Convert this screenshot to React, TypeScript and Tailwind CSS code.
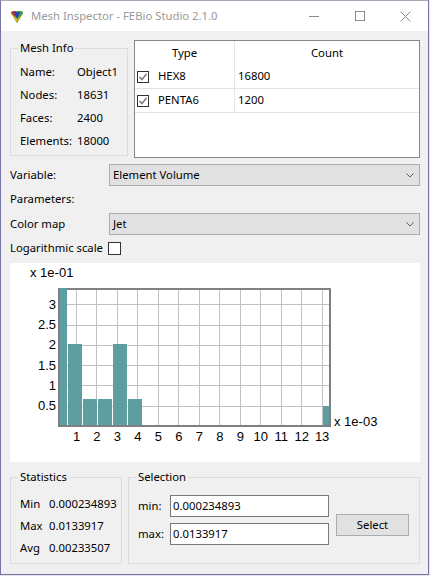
import type { ReactNode } from 'react'

const BAR_COLOR = '#5f9ea0'
const PLOT = { left: 49, top: 26, right: 320, bottom: 163 }
const X_TICK0 = 66
const X_TICK_STEP = 20.47
const Y_UNIT = 40.56
const BAR_X0 = 43
const BAR_PITCH = 15
const BAR_WIDTH = 14

// histogram bins (value in units of 1e-01)
const BARS = [
  { k: 0, value: 3.42 },
  { k: 1, value: 2.03 },
  { k: 2, value: 0.666 },
  { k: 3, value: 0.666 },
  { k: 4, value: 2.03 },
  { k: 5, value: 0.666 },
  { k: 18, value: 0.5 },
]

const Y_TICKS = ['0.5', '1', '1.5', '2', '2.5', '3']
const X_TICKS = ['1', '2', '3', '4', '5', '6', '7', '8', '9', '10', '11', '12', '13']

const ELEMENT_TYPES = [
  { type: 'HEX8', count: '16800' },
  { type: 'PENTA6', count: '1200' },
]

const MESH_INFO = [
  ['Name:', 'Object1'],
  ['Nodes:', '18631'],
  ['Faces:', '2400'],
  ['Elements:', '18000'],
]

const STATS = [
  ['Min', '0.000234893'],
  ['Max', '0.0133917'],
  ['Avg', '0.00233507'],
]

function AppIcon() {
  return (
    <svg width="14" height="14" viewBox="0 0 14 14">
      <path d="M1 3 Q1 1.5 3 1.3 L11 1.3 Q13 1.5 13 3 L7 13 Z" fill="#3a7a2a" />
      <polygon points="1,3 3,1.3 6,1.3 6,7" fill="#d9261c" />
      <polygon points="8,1.3 11,1.3 13,3 8,7" fill="#3aa53a" />
      <polygon points="3.5,2.2 10.5,2.2 7,8.5" fill="#2340d0" />
      <polygon points="1,3 7,8.5 7,13" fill="#e0b020" />
      <polygon points="13,3 7,8.5 7,13" fill="#8cb030" />
    </svg>
  )
}

function CheckBox({ checked, size }: { checked: boolean; size: 'sm' | 'md' }) {
  return (
    <span
      className={
        size === 'sm'
          ? 'flex h-[12px] w-[12px] shrink-0 items-center justify-center border border-[#333333] bg-white'
          : 'flex h-[13px] w-[13px] shrink-0 items-center justify-center border border-[#333333] bg-white'
      }
    >
      {checked && (
        <svg width="10" height="10" viewBox="0 0 10 10">
          <path d="M1.5 5 L4 7.5 L8.5 2" fill="none" stroke="#6b6b6b" strokeWidth="1.2" />
        </svg>
      )}
    </span>
  )
}

function GroupBox({ title, className, children }: { title: string; className: string; children: ReactNode }) {
  return (
    <fieldset className={className}>
      <legend className="ml-[7px] px-[2px] leading-[16px]">{title}</legend>
      {children}
    </fieldset>
  )
}

function ComboBox({ value }: { value: string }) {
  return (
    <div className="flex h-[22px] items-center justify-between border border-[#adadad] bg-[#e1e1e1] pl-[3px] pr-[5px]">
      <span>{value}</span>
      <svg width="8" height="5" viewBox="0 0 8 5">
        <path d="M0.5 0.5 L4 4 L7.5 0.5" fill="none" stroke="#606060" strokeWidth="1" />
      </svg>
    </div>
  )
}

function Histogram() {
  return (
    <svg width="410" height="199" viewBox="0 0 410 199" className="block">
      {X_TICKS.map((_, i) => {
        const x = Math.round(X_TICK0 + X_TICK_STEP * i) + 0.5
        return <line key={`gx${i}`} x1={x} x2={x} y1={PLOT.top} y2={PLOT.bottom} stroke="#c0c0c0" strokeWidth="1" />
      })}
      {Y_TICKS.map((_, i) => {
        const y = Math.round(PLOT.bottom - Y_UNIT * 0.5 * (i + 1)) + 0.5
        return <line key={`gy${i}`} x1={PLOT.left} x2={PLOT.right} y1={y} y2={y} stroke="#c0c0c0" strokeWidth="1" />
      })}
      <rect
        x={PLOT.left}
        y={PLOT.top}
        width={PLOT.right - PLOT.left}
        height={PLOT.bottom - PLOT.top}
        fill="none"
        stroke="#808080"
        strokeWidth="2"
      />
      {BARS.map((b) => {
        const x0 = Math.max(BAR_X0 + BAR_PITCH * b.k, PLOT.left + 1)
        const x1 = Math.min(BAR_X0 + BAR_PITCH * b.k + BAR_WIDTH, PLOT.right - 1)
        const top = Math.max(Math.round(PLOT.bottom - b.value * Y_UNIT), PLOT.top - 1)
        return <rect key={b.k} x={x0} y={top} width={x1 - x0} height={PLOT.bottom - 1 - top} fill={BAR_COLOR} />
      })}
      <g fontFamily="'Liberation Sans', Arial, sans-serif" fontSize="13" fill="#000">
        <text x="20" y="14">x 1e-01</text>
        {Y_TICKS.map((t, i) => (
          <text key={t} x="46" y={PLOT.bottom - Y_UNIT * 0.5 * (i + 1) + 4.6} textAnchor="end">
            {t}
          </text>
        ))}
        {X_TICKS.map((t, i) => (
          <text key={t} x={X_TICK0 + X_TICK_STEP * i + 0.5} y="178" textAnchor="middle">
            {t}
          </text>
        ))}
        <text x="324" y="162.5">x 1e-03</text>
      </g>
    </svg>
  )
}

export default function App() {
  return (
    <div className="h-[576px] w-[430px] bg-[#e6e6e6] font-['Noto_Sans',sans-serif] text-[11.3px] text-black">
      <div className="flex h-[575px] w-[429px] flex-col border border-[#7474a6] border-t-[#a8a8b8]">
        {/* Title bar */}
        <div className="flex h-[30px] shrink-0 items-center bg-white">
          <div className="ml-[9px] mt-[1px]">
            <AppIcon />
          </div>
          <span className="ml-[7px] text-[11.3px] text-[#9a9a9a]">Mesh Inspector - FEBio Studio 2.1.0</span>
          <div className="ml-auto flex h-full">
            <div className="flex w-[46px] items-center justify-center">
              <span className="h-px w-[10px] bg-[#8a8a8a]" />
            </div>
            <div className="flex w-[46px] items-center justify-center">
              <span className="h-[10px] w-[10px] border border-[#8a8a8a]" />
            </div>
            <div className="flex w-[45px] items-center justify-center">
              <svg width="11" height="11" viewBox="0 0 11 11">
                <path d="M0.5 0.5 L10.5 10.5 M10.5 0.5 L0.5 10.5" stroke="#8a8a8a" strokeWidth="1" />
              </svg>
            </div>
          </div>
        </div>

        {/* Dialog body */}
        <div className="flex flex-1 flex-col bg-[#f0f0f0] pl-[9px] pr-[8px] pt-[9px]">
          <div className="flex gap-[6px]">
            <GroupBox title="Mesh Info" className="h-[116px] w-[118px] border border-[#dcdcdc]">
              <div className="grid grid-cols-[57px_1fr] pl-[9px] pt-[5px]">
                {MESH_INFO.map(([label, value]) => (
                  <div key={label} className="contents">
                    <span className="flex h-[23px] items-center">{label}</span>
                    <span className="flex h-[23px] items-center">{value}</span>
                  </div>
                ))}
              </div>
            </GroupBox>

            <div className="h-[118px] w-[286px] border border-[#828790] bg-white">
              <div className="flex h-[24px]">
                <div className="flex w-[100px] items-center justify-center border-r border-[#e5e5e5]">Type</div>
                <div className="flex flex-1 items-center justify-center">Count</div>
              </div>
              {ELEMENT_TYPES.map((row) => (
                <div key={row.type} className="flex h-[24px] border-b border-[#e3e3e3]">
                  <div className="flex w-[100px] items-center gap-[9px] border-r border-[#e5e5e5] pl-[2px]">
                    <CheckBox checked size="sm" />
                    <span>{row.type}</span>
                  </div>
                  <div className="flex flex-1 items-center pl-[3px]">{row.count}</div>
                </div>
              ))}
            </div>
          </div>

          <div className="mt-[6px] grid grid-cols-[99px_1fr] items-center">
            <span>Variable:</span>
            <ComboBox value="Element Volume" />
          </div>
          <div className="flex h-[27px] items-center">Parameters:</div>
          <div className="grid grid-cols-[99px_1fr] items-center">
            <span>Color map</span>
            <ComboBox value="Jet" />
          </div>
          <div className="flex h-[26px] items-center gap-[5px]">
            <span>Logarithmic scale</span>
            <CheckBox checked={false} size="md" />
          </div>

          <div className="mt-[2px] h-[199px] w-[410px] bg-white">
            <Histogram />
          </div>

          <div className="mt-[7px] flex gap-[6px]">
            <GroupBox title="Statistics" className="h-[95px] w-[112px] border border-[#dcdcdc]">
              <div className="grid grid-cols-[29px_1fr] pl-[9px] pt-[8px]">
                {STATS.map(([label, value]) => (
                  <div key={label} className="contents">
                    <span className="flex h-[22px] items-center">{label}</span>
                    <span className="flex h-[22px] items-center">{value}</span>
                  </div>
                ))}
              </div>
            </GroupBox>

            <GroupBox title="Selection" className="h-[95px] w-[292px] border border-[#dcdcdc]">
              <div className="flex pl-[9px] pt-[10px]">
                <div className="grid grid-cols-[32px_159px] items-center gap-y-[6px]">
                  <span>min:</span>
                  <div className="flex h-[22px] items-center border border-[#7a7a7a] bg-white pl-[2px]">0.000234893</div>
                  <span>max:</span>
                  <div className="flex h-[22px] items-center border border-[#7a7a7a] bg-white pl-[2px]">0.0133917</div>
                </div>
                <button
                  type="button"
                  className="ml-[7px] mt-[19px] h-[22px] w-[73px] border border-[#adadad] bg-[#e1e1e1]"
                >
                  Select
                </button>
              </div>
            </GroupBox>
          </div>
        </div>
      </div>
    </div>
  )
}
